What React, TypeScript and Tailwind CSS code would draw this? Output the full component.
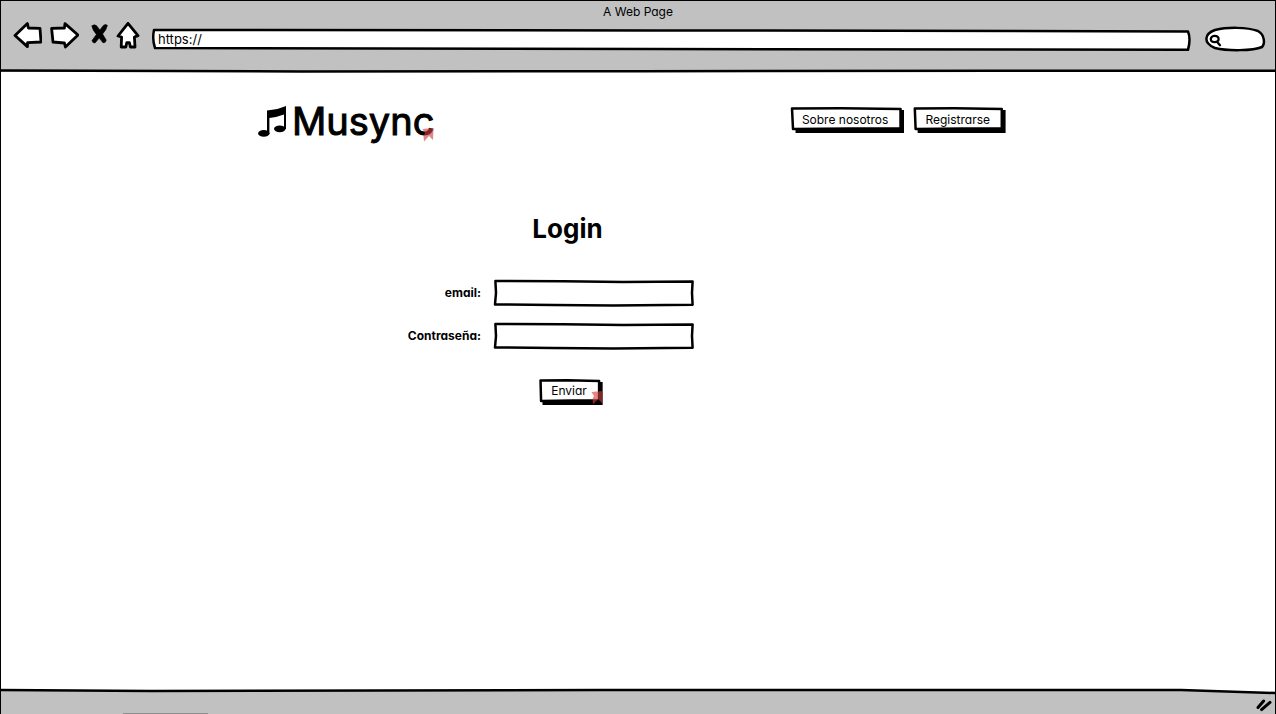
import type { ButtonHTMLAttributes, InputHTMLAttributes, ReactNode } from "react";

function SketchFrame({ viewBox, d }: { viewBox: string; d: string }) {
  return (
    <svg
      className="pointer-events-none absolute inset-0 size-full overflow-visible"
      viewBox={viewBox}
      preserveAspectRatio="none"
      aria-hidden="true"
    >
      <path d={d} fill="#fff" stroke="#000" strokeWidth="2.5" strokeLinejoin="round" vectorEffect="non-scaling-stroke" />
    </svg>
  );
}

function ToolButton({ label, className, viewBox, children }: { label: string; className: string; viewBox: string; children: ReactNode }) {
  return (
    <button type="button" aria-label={label} className={`shrink-0 ${className}`}>
      <svg className="size-full" viewBox={viewBox} fill="#fff" stroke="#000" strokeWidth="2.8" strokeLinejoin="round" strokeLinecap="round">
        {children}
      </svg>
    </button>
  );
}

function SketchButton({ children, ...rest }: ButtonHTMLAttributes<HTMLButtonElement>) {
  return (
    <button className="relative h-[26px] pr-4 pb-px pl-[11px] text-[12px] leading-6" {...rest}>
      <svg className="absolute inset-0 size-full" viewBox="0 0 100 26" preserveAspectRatio="none" aria-hidden="true">
        <path d="M4 3 L100 3 L100 26 L4 26 Z" />
      </svg>
      <span className="absolute top-0 right-[3px] bottom-[3px] left-0">
        <SketchFrame viewBox="0 0 110 23" d="M1 1.4 L50 1.2 L109 2 L109 21.5 L60 21.5 L2 22 Z" />
      </span>
      <span className="relative">{children}</span>
    </button>
  );
}

function Field({ label, id, ...rest }: { label: string; id: string } & InputHTMLAttributes<HTMLInputElement>) {
  return (
    <>
      <label htmlFor={id} className="text-right text-[12px] font-bold whitespace-nowrap">
        {label}
      </label>
      <div className="relative h-[27px]">
        <SketchFrame viewBox="0 0 200 27" d="M2.4 2 L70 2.2 L130 3 L199.6 2.4 L199 14 L199.6 25.8 L120 26.4 L60 26 L2 25.4 L3 14 Z" />
        <input id={id} className="relative size-full bg-transparent px-2 text-[12px] outline-none" {...rest} />
      </div>
    </>
  );
}

function Ribbon({ className }: { className: string }) {
  return (
    <svg className={`pointer-events-none absolute h-[14px] w-[12px] ${className}`} viewBox="0 0 12 14" aria-hidden="true">
      <path d="M0.5 1 L11.5 0 L11 12 L7 8 L2 13.5 L1.5 8 L3 5 Z" fill="#d03c3c" opacity="0.62" />
    </svg>
  );
}

export default function App() {
  return (
    <div className="flex min-h-screen flex-col border-x border-t border-black bg-white font-['Inter',sans-serif] text-black [font-feature-settings:'cv11']">
      <header className="relative bg-[#c1c1c1] pb-[22px]">
        <p className="h-[21px] text-center text-[12px] leading-[22px]">A Web Page</p>
        <div className="flex h-7 items-start pr-[10px] pl-[12px]">
          <ToolButton label="Atrás" className="h-7 w-[29px]" viewBox="0 0 29 28">
            <path d="M2 13.5 L14.4 1.6 L15.4 6 L27 6.4 L28 20 L14.6 20.6 L14.4 24.6 Z" />
          </ToolButton>
          <ToolButton label="Adelante" className="ml-2 h-7 w-[29px]" viewBox="0 0 29 28">
            <path d="M1.6 6.4 L14.4 6 L15 1.6 L28 13 L15.4 25 L14.4 21 L3 20 Z" />
          </ToolButton>
          <ToolButton label="Detener" className="ml-3 h-7 w-[17px]" viewBox="0 0 17 28">
            <path
              d="M1 4 Q3 1.8 5.4 3.6 L8.8 8 L12.4 3.4 Q14.6 1.8 16.4 3.4 Q15.6 7.4 11.6 12 L15.2 18 Q15 21 12 20.8 L8.2 16 L4 21 Q1.4 21.2 1 18.6 L5.4 12.4 Q1.4 8 1 4 Z"
              fill="#000"
              strokeWidth="0.6"
            />
          </ToolButton>
          <ToolButton label="Inicio" className="ml-2 h-7 w-6" viewBox="0 0 24 28">
            <path d="M12 1.4 L22 13.6 L18.4 15 L19 25 L14.4 25 L13.4 20.6 L10.8 20.6 L9.8 25 L5.2 25 L5.6 15 L2 14 Z" />
          </ToolButton>
          <div className="relative mt-[7px] ml-3 h-[22px] flex-1">
            <SketchFrame viewBox="0 0 1038 22" d="M2 1 L500 1.4 L1036 2.4 Q1039 10 1036 20.8 L500 20 L3 19 Q0 10 2 1 Z" />
            <input aria-label="Dirección" defaultValue="https://" className="relative block h-5 w-full bg-transparent px-[6px] text-[13px] outline-none" />
          </div>
          <div className="relative mt-[5px] ml-[15px] h-6 w-[60px]">
            <SketchFrame viewBox="0 0 60 24" d="M10 3 C22 0 42 0 53 4 C60 8 60 17 57 20 C48 24 22 24 10 21 C-2 16 -1 7 10 3 Z" />
            <svg className="absolute top-[7px] left-1 size-[14px]" viewBox="0 0 12 12" fill="none" stroke="#000" strokeWidth="2" strokeLinecap="round" aria-hidden="true">
              <path d="M8.2 5 C8.6 2.4 6.6 1.4 4.4 1.6 C2 1.8 1 4 1.8 5.6 C3 7.6 7.6 7.4 8.2 5 Z M7.2 7 L9.4 9.6" />
            </svg>
            <input aria-label="Buscar" className="relative block size-full bg-transparent pr-2 pl-4 text-[12px] outline-none" />
          </div>
        </div>
        <svg className="absolute inset-x-0 bottom-0 h-1 w-full overflow-visible" viewBox="0 0 1274 4" preserveAspectRatio="none" aria-hidden="true">
          <path d="M0 2.4 L300 3.4 L640 3.2 L1000 2.8 L1274 2.8" stroke="#000" strokeWidth="2.5" fill="none" />
        </svg>
      </header>

      <main className="flex-1 px-4 pt-[30px]">
        <div className="mx-auto max-w-[760px] pr-3">
          <div className="flex items-center justify-between">
            <a href="#" className="relative flex items-center gap-[6px] pt-[2px]" aria-label="Musync">
              <svg className="h-8 w-[28px]" viewBox="0 0 28 32" aria-hidden="true">
                <path d="M9 5.5 Q20 4.5 28 1 V24 H26 V9.5 Q18 12.5 11.4 13 V29 H9 Z" />
                <ellipse cx="5.8" cy="28.4" rx="5.7" ry="3.3" />
                <ellipse cx="21.8" cy="23.8" rx="5.8" ry="3.4" />
              </svg>
              <span className="text-[38px] leading-[34px] [-webkit-text-stroke:1px_#000]">Musync</span>
              <Ribbon className="right-0 -bottom-1" />
            </a>
            <nav className="flex gap-[10px]">
              <SketchButton type="button">Sobre nosotros</SketchButton>
              <SketchButton type="button">Registrarse</SketchButton>
            </nav>
          </div>

          <form className="mt-[73px] ml-37 w-[287px]" onSubmit={(e) => e.preventDefault()}>
            <h1 className="pl-9 text-center text-[26px] leading-9 font-bold">Login</h1>
            <div className="mt-8 grid grid-cols-[75px_1fr] items-center gap-x-3 gap-y-4">
              <Field label="email:" id="email" type="email" />
              <Field label="Contraseña:" id="password" type="password" />
            </div>
            <div className="mt-7 flex justify-center pl-11">
              <div className="relative">
                <SketchButton type="submit">Enviar</SketchButton>
                <Ribbon className="right-0 bottom-0" />
              </div>
            </div>
          </form>
        </div>
      </main>

      <footer className="relative flex h-6 items-center justify-end bg-[#c1c1c1] pt-[6px] pr-[3px]">
        <svg className="absolute inset-x-0 top-0 h-1 w-full overflow-visible" viewBox="0 0 1274 4" preserveAspectRatio="none" aria-hidden="true">
          <path d="M0 0 L1180 0 L1274 3 V-3 H0 Z" fill="#fff" />
          <path d="M0 0 L150 1 L600 0 L1180 0 L1274 3" stroke="#000" strokeWidth="2.5" fill="none" />
          <path d="M122 23.5 H207" stroke="#8f8f8f" />
        </svg>
        <svg className="h-4 w-4" viewBox="0 0 16 16" stroke="#000" strokeWidth="3" strokeLinecap="round" aria-hidden="true">
          <path d="M2 10.5 L7.6 4 M5.6 12.6 L14 5.4" />
        </svg>
      </footer>
    </div>
  );
}
